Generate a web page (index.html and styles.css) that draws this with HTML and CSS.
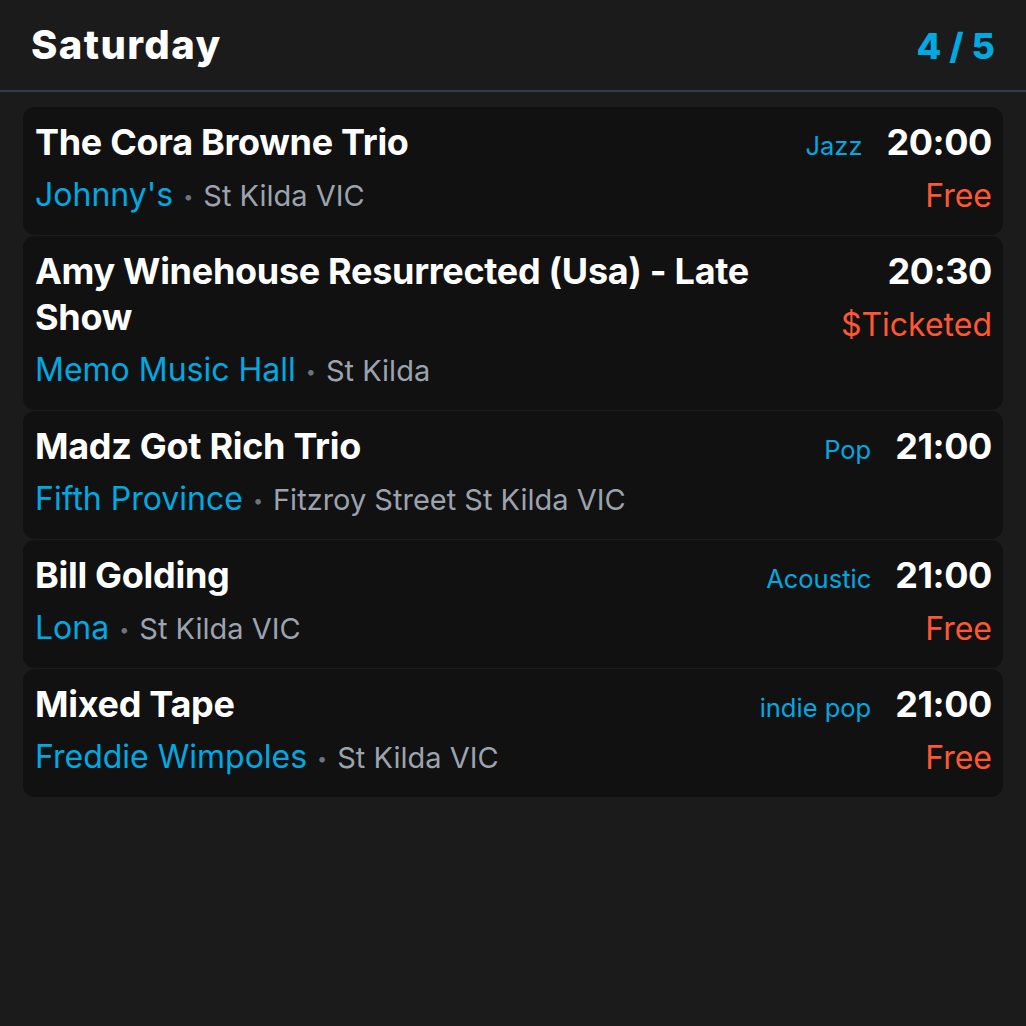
FILE: index.html
```html
<!DOCTYPE html>
<html>
<head>
<meta charset="utf-8">
<link rel="stylesheet" href="styles.css">
</head>
<body>
<header class="header">
  <h1 class="day">Saturday</h1>
  <div class="count">4 / 5</div>
</header>
<main class="list">
  <div class="card">
    <div class="main">
      <div class="title">The Cora Browne Trio</div>
      <div class="venue"><span class="vname">Johnny's</span><span class="dot">•</span><span class="loc">St Kilda VIC</span></div>
    </div>
    <div class="side">
      <div class="top"><span class="genre">Jazz</span><span class="time">20:00</span></div>
      <div class="price">Free</div>
    </div>
  </div>
  <div class="card">
    <div class="main">
      <div class="title">Amy Winehouse Resurrected (Usa) - Late Show</div>
      <div class="venue"><span class="vname">Memo Music Hall</span><span class="dot">•</span><span class="loc">St Kilda</span></div>
    </div>
    <div class="side">
      <div class="top"><span class="time">20:30</span></div>
      <div class="price">$Ticketed</div>
    </div>
  </div>
  <div class="card">
    <div class="main">
      <div class="title">Madz Got Rich Trio</div>
      <div class="venue"><span class="vname">Fifth Province</span><span class="dot">•</span><span class="loc">Fitzroy Street St Kilda VIC</span></div>
    </div>
    <div class="side">
      <div class="top"><span class="genre">Pop</span><span class="time">21:00</span></div>
    </div>
  </div>
  <div class="card">
    <div class="main">
      <div class="title">Bill Golding</div>
      <div class="venue"><span class="vname">Lona</span><span class="dot">•</span><span class="loc">St Kilda VIC</span></div>
    </div>
    <div class="side">
      <div class="top"><span class="genre">Acoustic</span><span class="time">21:00</span></div>
      <div class="price">Free</div>
    </div>
  </div>
  <div class="card">
    <div class="main">
      <div class="title">Mixed Tape</div>
      <div class="venue"><span class="vname">Freddie Wimpoles</span><span class="dot">•</span><span class="loc">St Kilda VIC</span></div>
    </div>
    <div class="side">
      <div class="top"><span class="genre">indie pop</span><span class="time">21:00</span></div>
      <div class="price">Free</div>
    </div>
  </div>
</main>
</body>
</html>
```
FILE: styles.css
```css
html, body {
  margin: 0;
  padding: 0;
  background: #1b1b1b;
  color: #ffffff;
  font-family: Inter, "Noto Sans", sans-serif;
}

.header {
  display: flex;
  justify-content: space-between;
  align-items: baseline;
  padding: 21px 31px 20px 31px;
  border-bottom: 2px solid #353b47;
}

.day {
  margin: 0;
  font-size: 40px;
  font-weight: 800;
  line-height: 48px;
  letter-spacing: 1.4px;
}

.count {
  font-size: 36px;
  font-weight: 800;
  line-height: 48px;
  color: #00a9e0;
}

.list {
  display: flex;
  flex-direction: column;
  gap: 1px;
  padding: 15px 23px;
}

.card {
  display: flex;
  gap: 24px;
  background: #111111;
  border-radius: 12px;
  padding: 12px 11px 20px 12px;
}

.main {
  flex: 1;
  min-width: 0;
}

.title {
  font-size: 36px;
  font-weight: 700;
  line-height: 46px;
  letter-spacing: -0.3px;
}

.venue {
  margin-top: 9px;
  font-size: 32px;
  line-height: 41px;
  height: 41px;
  white-space: nowrap;
}

.vname {
  color: #00a9e0;
}

.dot {
  color: #6b7280;
  font-size: 18px;
  line-height: 1;
  margin: 0 10px;
  vertical-align: 3px;
}

.loc {
  color: #9ca3af;
  font-size: 29px;
  line-height: 1;
}

.side {
  display: flex;
  flex-direction: column;
  align-items: flex-end;
}

.top {
  display: flex;
  align-items: baseline;
  gap: 24px;
  height: 46px;
}

.genre {
  font-size: 25.5px;
  line-height: 1;
  color: #00a9e0;
}

.time {
  font-size: 36px;
  font-weight: 700;
  line-height: 46px;
  letter-spacing: -0.4px;
}

.price {
  margin-top: 12px;
  font-size: 32px;
  line-height: 38px;
  color: #ff5733;
}
```
